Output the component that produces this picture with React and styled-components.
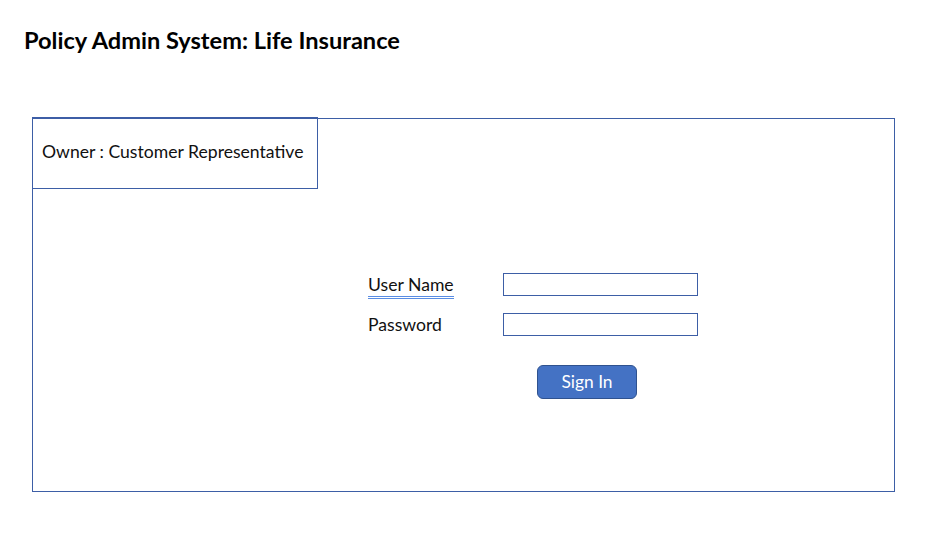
import React from 'react'
import styled, { createGlobalStyle } from 'styled-components'

const GlobalStyle = createGlobalStyle`
  body {
    margin: 0;
    background: #ffffff;
    font-family: Lato, "Open Sans", sans-serif;
    color: #111111;
  }
`

const Page = styled.div`
  width: 936px;
  height: 560px;
  padding: 26px 0 0 24px;
  box-sizing: border-box;
`

const Title = styled.h1`
  margin: 0;
  font-size: 23.6px;
  font-weight: 700;
  line-height: 28px;
  color: #000000;
`

const Panel = styled.div`
  margin: 64px 0 0 8px;
  width: 863px;
  height: 374px;
  box-sizing: border-box;
  border: 1px solid #3d5ea6;
  display: flex;
  flex-direction: column;
`

const OwnerBox = styled.div`
  margin: -2px 0 0 -1px;
  width: 286px;
  height: 72px;
  box-sizing: border-box;
  border: 1px solid #3d5ea6;
  display: flex;
  align-items: center;
  padding: 0 0 3px 9px;
  font-size: 17.6px;
`

const Form = styled.div`
  margin: 84px 0 0 335px;
  display: grid;
  grid-template-columns: 135px 195px;
  grid-template-rows: 23px 23px auto;
  row-gap: 17px;
  align-items: center;
`

const spellLine = 'linear-gradient(#5a8de3, #5a8de3)'

const Label = styled.span`
  font-size: 17.6px;
  line-height: 20px;
  width: fit-content;
  padding-bottom: 4px;
  margin-bottom: -4px;
  background: ${({ $spell }) =>
    $spell
      ? `${spellLine} left 0 bottom 0 / 100% 1px no-repeat, ${spellLine} left 0 bottom 2px / 100% 1px no-repeat`
      : 'none'};
`

const Input = styled.input`
  width: 195px;
  height: 23px;
  box-sizing: border-box;
  border: 1px solid #3d5ea6;
  border-radius: 0;
  outline: none;
  padding: 0 4px;
`

const ButtonRow = styled.div`
  grid-column: 2;
  padding-left: 34px;
  margin-top: 12px;
`

const SignIn = styled.button`
  width: 100px;
  height: 34px;
  border-radius: 6px;
  border: 1px solid #2f528f;
  background: #4472c4;
  color: #ffffff;
  font-family: Lato, "Open Sans", sans-serif;
  font-size: 17.4px;
  padding: 0 0 2px;
  cursor: pointer;
`

export default function App() {
  return (
    <>
      <GlobalStyle />
      <Page>
        <Title>Policy Admin System: Life Insurance</Title>
        <Panel>
          <OwnerBox>Owner : Customer Representative</OwnerBox>
          <Form>
            <Label $spell>User Name</Label>
            <Input type="text" />
            <Label>Password</Label>
            <Input type="password" />
            <ButtonRow>
              <SignIn>Sign In</SignIn>
            </ButtonRow>
          </Form>
        </Panel>
      </Page>
    </>
  )
}
